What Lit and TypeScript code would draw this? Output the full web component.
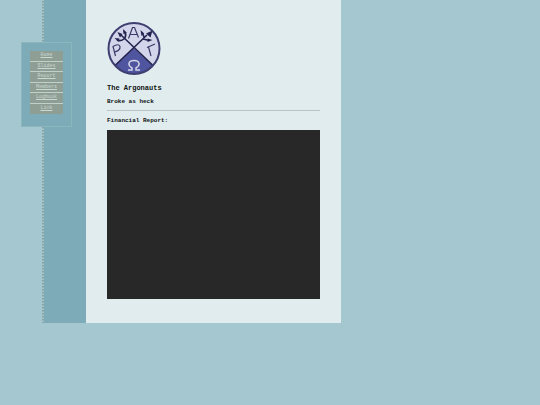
import { LitElement, html, css } from "lit";
import { customElement } from "lit/decorators.js";

@customElement("argo-logo")
class ArgoLogo extends LitElement {
  static styles = css`
    :host { display: block; width: 54px; height: 54px; }
    svg { display: block; width: 100%; height: 100%; }
  `;
  render() {
    return html`
      <svg viewBox="0 0 54 54" role="img" aria-label="The Argonauts crest" fill="none">
        <circle cx="27" cy="26.5" r="25.5" fill="#d3d5ea" />
        <path d="M26.5 26 L46 43.500 A25.5 25.5 0 0 1 8 43.500 Z" fill="#4f559f" />
        <path d="M46 43.500 L14 13 M8 43.500 L40 13" stroke="#24244f" stroke-width="1.6" />
        <g stroke="#24244f" stroke-width="1.7">
          <path d="M10 18 Q14 20 17.5 16.500 Q20 13 17 9" />
          <path d="M35 10 L37.5 16 M42.500 18.500 L36 17" />
        </g>
        <g fill="#24244f">
          <path d="M10.5 10 L15.5 12 L13 15.5 Z M7.5 16 L12.5 16.500 L11.5 20 Z M16 7 L20 11 L16.5 12 Z" />
          <path d="M45.500 8.5 L43.500 15.5 L39 11.5 Z M33.5 8 L37 11.5 L34.5 14 Z M45.5 18 L40.5 16.500 L40.5 20 Z" />
        </g>
        <g stroke="#3a3a68" stroke-width="1.2">
          <path d="M21.5 16.500 L25.500 5.500 L27.5 5.500 L31.5 15.500 M23 12.500 H30" />
          <path d="M8.500 34 L6 24.500 Q11.5 21 13 24.500 Q13.5 28.5 7.5 30" />
          <path d="M44 34 L41.5 25 M40 25.5 L48 22" />
        </g>
        <path d="M21 48 H25 V46 Q21.5 44 22 41.5 Q22.5 38.5 27 38.5 Q31.5 38.5 32 41.5 Q32.5 44 29 46 V48 H33" stroke="#d3d5ea" stroke-width="1.5" />
        <circle cx="27" cy="26.5" r="25.5" stroke="#3e3e70" stroke-width="2" />
      </svg>
    `;
  }
}

@customElement("app-root")
class AppRoot extends LitElement {
  static styles = css`
    :host {
      display: block;
      min-height: 100vh;
      background: #a5c7d0;
      color: #101414;
      font-family: "Liberation Mono", "Courier New", monospace;
    }
    .page { display: flex; padding-left: 42px; }
    .side {
      position: relative;
      flex: 0 0 44px;
      box-sizing: border-box;
      background: #7eabb8;
      border-left: 2px solid #a5c7d0;
    }
    .side::before {
      content: "";
      position: absolute;
      inset: 0 auto 0 -2px;
      width: 2px;
      background: repeating-linear-gradient(#a3c3c9 0 1px, #87a5a6 1px 2px, #97b5b8 2px 3px);
    }
    nav {
      position: absolute;
      top: 42px;
      left: -23px;
      box-sizing: border-box;
      width: 51px;
      padding: 8px 8px 12px;
      background: #7eabb8;
      border: 1px solid #8ab6bd;
    }
    ul {
      display: flex;
      flex-direction: column;
      height: 63px;
      margin: 0;
      padding: 0;
      list-style: none;
    }
    li {
      flex: 1;
      display: grid;
      box-sizing: border-box;
      min-height: 0;
      background: #8e9e94;
      border-bottom: 1px solid #c0d0ca;
    }
    li:last-child { border-bottom-color: #8e9e94; }
    a {
      color: #cbd8d2;
      font-size: 5px;
      line-height: 9px;
      text-align: center;
      text-decoration: underline;
    }
    main {
      flex: 0 1 255px;
      box-sizing: border-box;
      min-width: 0;
      padding: 22px 21px 24px;
      background: #e1ecee;
    }
    h1, h2, h3 { margin: 0; font-weight: bold; white-space: nowrap; }
    h1 { margin-top: 7px; font-size: 7px; line-height: 10px; }
    h2 { margin-top: 4px; font-size: 6px; line-height: 10px; }
    hr { margin: 3px 0 5px; border: 0; border-top: 1px solid #b5c6c5; }
    h3 { font-size: 6px; line-height: 10px; }
    .report { height: 169px; margin-top: 4px; background: #282828; }
  `;

  private links = ["Home", "Slides", "Report", "Members", "Logbook", "Link"];

  render() {
    return html`
      <div class="page">
        <div class="side">
          <nav aria-label="Main">
            <ul>${this.links.map((l) => html`<li><a href="#${l.toLowerCase()}">${l}</a></li>`)}</ul>
          </nav>
        </div>
        <main>
          <argo-logo></argo-logo>
          <h1>The Argonauts</h1>
          <h2>Broke as heck</h2>
          <hr />
          <h3>Financial Report:</h3>
          <div class="report"></div>
        </main>
      </div>
    `;
  }
}
